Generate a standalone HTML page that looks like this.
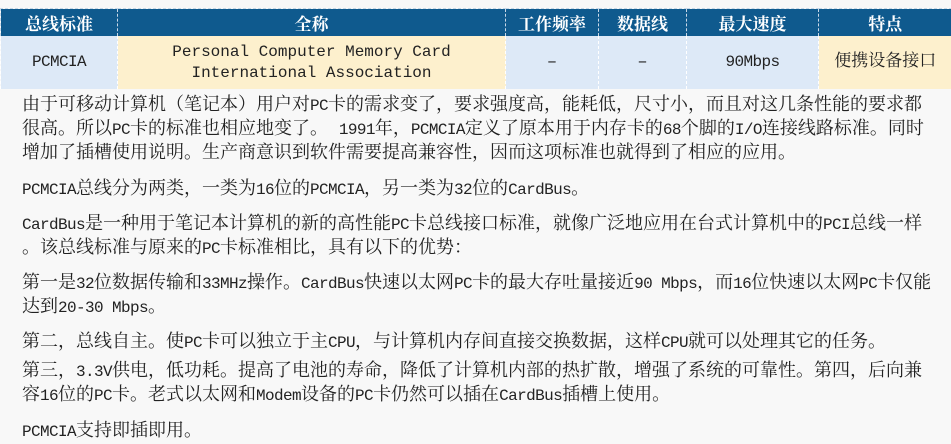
<!DOCTYPE html>
<html><head><meta charset="utf-8"><style>
body{margin:0;width:951px;height:444px;background:#f8f8f8;overflow:hidden;position:relative;font-family:"Liberation Mono","Noto Serif CJK SC",serif;color:#222}
.l{font-family:"Liberation Mono",monospace;font-size:16px;letter-spacing:-0.6px}
table{position:absolute;left:0;top:8px;border-collapse:collapse;width:951px;table-layout:fixed}
th{background:#0f5a8e;color:#fff;font-family:"Noto Serif CJK SC",serif;font-weight:bold;font-size:17px;height:27px;padding:0;border-left:1px dashed #c8d8e8;border-top:1px dashed #c8d8e8}
td{height:53px;padding:0;text-align:center;font-size:17px;border-left:1px dashed #fff;line-height:20px}
.b{background:#dde9f7}.y{background:#fdf0cd}
.t{position:absolute;left:22px;white-space:nowrap;font-size:18px;line-height:24px}
</style></head><body>
<table><colgroup><col style="width:117px"><col style="width:388px"><col style="width:93px"><col style="width:88px"><col style="width:132px"><col style="width:133px"></colgroup>
<tr><th>总线标准</th><th>全称</th><th>工作频率</th><th>数据线</th><th>最大速度</th><th>特点</th></tr>
<tr><td class="b"><span class="l">PCMCIA</span></td><td class="y"><span class="l" style="font-size:16px;letter-spacing:0">Personal Computer Memory Card<br>International Association</span></td><td class="b">–</td><td class="b">–</td><td class="b"><span class="l">90Mbps</span></td><td class="y">便携设备接口</td></tr>
</table>
<div class="t" style="top:94px">由于可移动计算机（笔记本）用户对<span class="l">PC</span>卡的需求变了，要求强度高，能耗低，尺寸小，而且对这几条性能的要求都</div>
<div class="t" style="top:118px">很高。所以<span class="l">PC</span>卡的标准也相应地变了。 <span class="l">1991</span>年，<span class="l">PCMCIA</span>定义了原本用于内存卡的<span class="l">68</span>个脚的<span class="l">I/O</span>连接线路标准。同时</div>
<div class="t" style="top:142px">增加了插槽使用说明。生产商意识到软件需要提高兼容性，因而这项标准也就得到了相应的应用。</div>
<div class="t" style="top:178px"><span class="l">PCMCIA</span>总线分为两类，一类为<span class="l">16</span>位的<span class="l">PCMCIA</span>，另一类为<span class="l">32</span>位的<span class="l">CardBus</span>。</div>
<div class="t" style="top:213px"><span class="l">CardBus</span>是一种用于笔记本计算机的新的高性能<span class="l">PC</span>卡总线接口标准，就像广泛地应用在台式计算机中的<span class="l">PCI</span>总线一样</div>
<div class="t" style="top:237px">。该总线标准与原来的<span class="l">PC</span>卡标准相比，具有以下的优势：</div>
<div class="t" style="top:272px">第一是<span class="l">32</span>位数据传输和<span class="l">33MHz</span>操作。<span class="l">CardBus</span>快速以太网<span class="l">PC</span>卡的最大存吐量接近<span class="l">90 Mbps</span>，而<span class="l">16</span>位快速以太网<span class="l">PC</span>卡仅能</div>
<div class="t" style="top:296px">达到<span class="l">20-30 Mbps</span>。</div>
<div class="t" style="top:331px">第二，总线自主。使<span class="l">PC</span>卡可以独立于主<span class="l">CPU</span>，与计算机内存间直接交换数据，这样<span class="l">CPU</span>就可以处理其它的任务。</div>
<div class="t" style="top:360px">第三，<span class="l">3.3V</span>供电，低功耗。提高了电池的寿命，降低了计算机内部的热扩散，增强了系统的可靠性。第四，后向兼</div>
<div class="t" style="top:384px">容<span class="l">16</span>位的<span class="l">PC</span>卡。老式以太网和<span class="l">Modem</span>设备的<span class="l">PC</span>卡仍然可以插在<span class="l">CardBus</span>插槽上使用。</div>
<div class="t" style="top:420px"><span class="l">PCMCIA</span>支持即插即用。</div>
</body></html>
